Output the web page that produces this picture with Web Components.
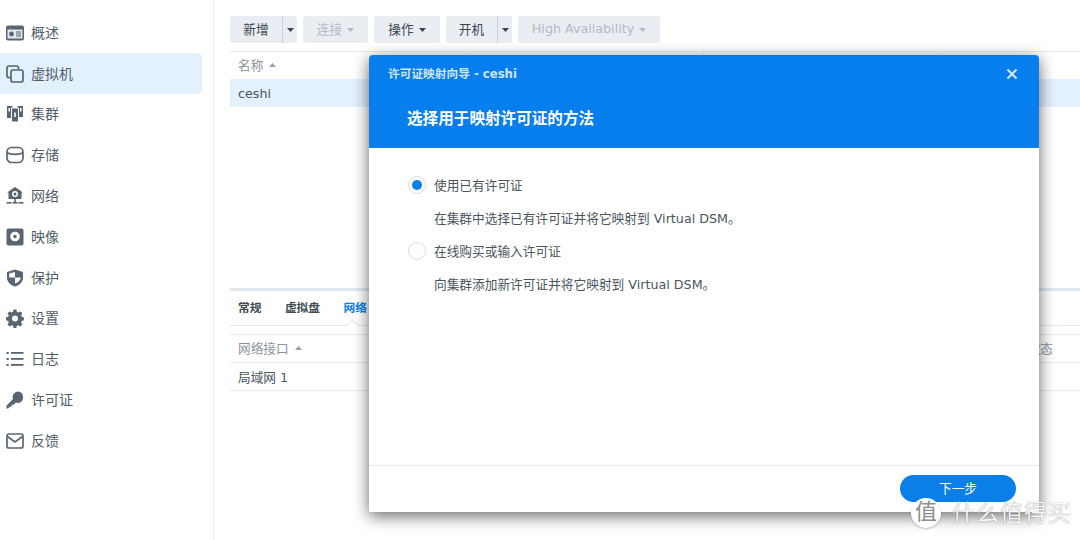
<!DOCTYPE html>
<html lang="zh">
<head>
<meta charset="utf-8">
<title>虚拟机</title>
<style>
html, body {
	margin: 0;
	height: 540px;
	overflow: hidden;
	background: #fff;
	font-family: "DejaVu Sans", "Noto Sans CJK SC", sans-serif;
	color: #4a5560;
}
</style>
</head>
<body>
<vm-app>
	<side-nav slot="nav">
		<nav-item icon="card">概述</nav-item>
		<nav-item icon="copy" active>虚拟机</nav-item>
		<nav-item icon="cluster">集群</nav-item>
		<nav-item icon="db">存储</nav-item>
		<nav-item icon="net">网络</nav-item>
		<nav-item icon="disc">映像</nav-item>
		<nav-item icon="shield">保护</nav-item>
		<nav-item icon="gear">设置</nav-item>
		<nav-item icon="list">日志</nav-item>
		<nav-item icon="key">许可证</nav-item>
		<nav-item icon="mail">反馈</nav-item>
	</side-nav>
	<tool-bar>
		<tool-btn split w="67">新增</tool-btn>
		<tool-btn caret disabled w="65">连接</tool-btn>
		<tool-btn caret w="66">操作</tool-btn>
		<tool-btn split w="66">开机</tool-btn>
		<tool-btn caret disabled w="142">High Availability</tool-btn>
	</tool-bar>
	<vm-table></vm-table>
	<detail-pane></detail-pane>
	<wizard-dialog>
		<wizard-option checked title-text="使用已有许可证">在集群中选择已有许可证并将它映射到 Virtual DSM。</wizard-option>
		<wizard-option title-text="在线购买或输入许可证">向集群添加新许可证并将它映射到 Virtual DSM。</wizard-option>
	</wizard-dialog>
	<water-mark></water-mark>
</vm-app>

<script>
// icons for the side menu, all on a 18x18 box
const ICONS = {
	card: `<rect x="0" y="1.500" width="18" height="15" rx="2" fill="#5a6572"/><rect x="1.500" y="5.500" width="15" height="9" fill="#e4e7ea"/><circle cx="5.500" cy="10" r="2.400" fill="#5a6572"/><path d="M10 8h5M10 10h5M10 12h5" stroke="#5a6572" stroke-width="1.200"/>`,
	copy: `<g fill="none" stroke="#5a6572" stroke-width="1.700"><path d="M4.500 12.500H3a2 2 0 0 1-2-2V3a2 2 0 0 1 2-2h7.500a2 2 0 0 1 2 2v1.500"/><rect x="5" y="5" width="12" height="12" rx="2"/></g>`,
	cluster: `<path d="M1 1h5.500v12H1zM11.500 1H17v11h-5.500z" fill="#5a6572"/><path d="M5 2.500h8V17H5z" fill="#fff"/><path d="M6 3.500h6V16.500H6z" fill="#5a6572"/><path d="M8.200 7.500h1.600V12H8.200zM2.500 3h1.500v3.500H2.500zM14 3h1.500v3.500H14z" fill="#fff"/>`,
	db: `<g fill="none" stroke="#5a6572" stroke-width="1.700"><rect x="1" y="1.500" width="16" height="15" rx="4.500"/><path d="M1 6.500c3 2.400 13 2.400 16 0"/></g>`,
	net: `<g fill="#5a6572"><path d="M9 0 17 5.500h-1.500V12h-13V5.500H1z"/><circle cx="9" cy="7" r="3" fill="#fff"/><circle cx="9" cy="7" r="1.500"/><rect x="8.200" y="12" width="1.600" height="3"/><rect x="0.500" y="15" width="5" height="1.600"/><rect x="6.500" y="15" width="5" height="1.600"/><rect x="12.500" y="15" width="5" height="1.600"/></g>`,
	disc: `<rect x="0.500" y="0.500" width="17" height="17" rx="2" fill="#5a6572"/><circle cx="9" cy="8.500" r="4.800" fill="#fff"/><circle cx="9" cy="8.500" r="1.700" fill="#5a6572"/>`,
	shield: `<path d="M9 0.500 17 3v5.500c0 4.500-3.400 7.700-8 9-4.600-1.300-8-4.500-8-9V3z" fill="#5a6572"/><path d="M9 3v5.500H3.200V4.600zM9 8.500h5.800c-.3 2.900-2.600 5-5.800 6.100z" fill="#fff"/>`,
	gear: `<path d="M7.500 0h3l.5 2.500 1.500.7L14.700 2l2.100 2.100-1.200 2.200.6 1.500 2.300.7v3l-2.300.7-.6 1.500 1.200 2.200-2.100 2.100-2.200-1.200-1.500.6-.5 2.300h-3L7 17.400l-1.500-.6L3.300 18l-2.100-2.100 1.200-2.200-.6-1.500L-.5 11.500v-3l2.300-.7.600-1.500L1.200 4.100 3.300 2l2.200 1.200L7 2.500z" transform="translate(.5 .5) scale(.94)" fill="#5a6572"/><circle cx="9" cy="9.500" r="3" fill="#fff"/>`,
	list: `<g fill="#5a6572"><rect x="0.500" y="2" width="2.200" height="2"/><rect x="0.500" y="8" width="2.200" height="2"/><rect x="0.500" y="14" width="2.200" height="2"/><rect x="5" y="2" width="12.500" height="1.800"/><rect x="5" y="8" width="12.500" height="1.800"/><rect x="5" y="14" width="12.500" height="1.800"/></g>`,
	key: `<path d="M12 0.500a5.800 5.800 0 0 1 0 11.500c-.8 0-1.500-.1-2.200-.4L7.600 13.800H5.600v2H3.600L2.300 17.500H.5v-2.700l6.300-6.600A5.800 5.800 0 0 1 12 .5z" fill="#5a6572"/>`,
	mail: `<g fill="none" stroke="#5a6572" stroke-width="1.700"><rect x="1" y="2" width="16" height="14" rx="2"/><path d="M1.500 4.500 9 10l7.500-5.500"/></g>`
};

const CARET = `<svg width="7" height="4" viewBox="0 0 7 4"><path d="M0 0h7L3.500 4z" fill="currentColor"/></svg>`;

class Base extends HTMLElement {
	constructor(html) {
		super();
		this.attachShadow({mode: "open"}).innerHTML = html;
	}
}

class VmApp extends Base {
	constructor() {
		super(`<style>
		:host { display: flex; position: relative; width: 1080px; height: 540px; overflow: hidden; }
		main { flex: 1; min-width: 0; display: flex; flex-direction: column; padding: 16px 0 0 16px; }
		</style>
		<slot name="nav"></slot>
		<main><slot></slot></main>`);
	}
}

class SideNav extends Base {
	constructor() {
		super(`<style>
		:host { display: flex; flex-direction: column; width: 202px; height: 540px; padding: 12.400px 11px 0 0; border-right: 1px solid #e8ecf0; flex: none; }
		</style><slot></slot>`);
	}
}

class NavItem extends Base {
	constructor() {
		super(`<style>
		:host { display: flex; align-items: center; height: 40.800px; flex: none; gap: 7px; padding-left: 6px; font-size: 14px; color: #525d69; border-radius: 0 5px 5px 0; }
		:host([active]) { background: #e3f0fd; }
		svg { width: 18px; height: 18px; overflow: visible; flex: none; }
		span { position: relative; top: -1px; }
		</style><svg viewBox="0 0 18 18"></svg><span><slot></slot></span>`);
	}
	connectedCallback() {
		this.shadowRoot.querySelector("svg").innerHTML = ICONS[this.getAttribute("icon")];
	}
}

class ToolBar extends Base {
	constructor() {
		super(`<style>
		:host { display: flex; gap: 6px; height: 27px; flex: none; }
		</style><slot></slot>`);
	}
}

class ToolBtn extends Base {
	constructor() {
		super(`<style>
		:host { display: flex; align-items: center; box-sizing: border-box; height: 27px; background: #e9eef3; border-radius: 3px; font-size: 12.700px; color: #3d4650; }
		:host([disabled]) { color: #b3bbc3; }
		.label { flex: 1; display: flex; justify-content: center; align-items: center; gap: 5px; padding-bottom: 2px; }
		.in { display: flex; padding-top: 2px; }
		.arrow { width: 15px; height: 100%; display: flex; align-items: center; justify-content: center; border-left: 1px solid #c9d0d8; box-sizing: border-box; flex: none; }
		</style><span class="label"><slot></slot><span class="in"></span></span><span class="arrow"></span>`);
	}
	connectedCallback() {
		this.style.width = this.getAttribute("w") + "px";
		this.shadowRoot.querySelector(".in").innerHTML = this.hasAttribute("caret") ? CARET : "";
		if(!this.hasAttribute("caret"))
			this.shadowRoot.querySelector(".in").remove();
		if(this.hasAttribute("split"))
			this.shadowRoot.querySelector(".arrow").innerHTML = CARET;
		else
			this.shadowRoot.querySelector(".arrow").remove();
	}
}

class VmTable extends Base {
	constructor() {
		super(`<style>
		:host { display: block; flex: none; margin-top: 8px; font-size: 12.700px; height: 237px; }
		.head { display: grid; grid-template-columns: 236px 237px 235px 1fr; height: 27px; border-top: 1px solid #e6eaee; color: #8b949d; }
		.head div { display: flex; align-items: center; gap: 6px; padding: 0 0 2px 8px; border-left: 1px solid #e6eaee; box-sizing: border-box; }
		.head div:first-child { border-left: 0; }
		.row { height: 28px; background: #e3f0fd; display: flex; align-items: center; padding-left: 8px; color: #4a5560; }
		svg { color: #9aa2aa; transform: rotate(180deg); }
		</style>
		<div class="head"><div>名称 ${CARET}</div><div></div><div></div><div></div></div>
		<div class="row">ceshi</div>`);
	}
}

class DetailPane extends Base {
	constructor() {
		super(`<style>
		:host { display: block; flex: none; border-top: 3px solid #dfe7ef; font-size: 11.700px; }
		.tabs { display: flex; gap: 23.500px; height: 34px; align-items: center; padding-left: 8px; border-bottom: 1px solid #e2e7ec; font-weight: 700; color: #414a54; position: relative; }
		.tabs span { position: relative; top: -2px; }
		.tabs .on { color: #0a7fe8; }
		.notch { position: absolute; left: 118px; bottom: -1px; width: 8px; height: 8px; background: #fff; border: 1px solid #e2e7ec; border-width: 1px 0 0 1px; transform: translateY(4px) rotate(45deg); }
		.head { display: flex; justify-content: space-between; align-items: center; height: 29px; margin-top: 8px; padding: 0 27px 2px 8px; border-top: 1px solid #e6eaee; border-bottom: 1px solid #e6eaee; color: #8b949d; font-size: 12.700px; box-sizing: border-box; }
		.head span { display: flex; align-items: center; gap: 6px; }
		.head svg { color: #9aa2aa; transform: rotate(180deg); }
		.row { height: 28px; display: flex; align-items: center; padding-left: 8px; border-bottom: 1px solid #e6eaee; box-sizing: border-box; font-size: 12.700px; color: #4a5560; }
		</style>
		<div class="tabs"><span>常规</span><span>虚拟盘</span><span class="on">网络</span><i class="notch"></i></div>
		<div class="head"><span>网络接口 ${CARET}</span><span>状态</span></div>
		<div class="row">局域网 1</div>`);
	}
}

class WizardDialog extends Base {
	constructor() {
		super(`<style>
		:host { position: absolute; left: 369px; top: 55px; width: 670px; height: 457px; display: flex; flex-direction: column; background: #fff; border-radius: 4px 4px 0 0; box-shadow: 0 4px 16px rgba(0,0,0,.6); }
		header { height: 93px; flex: none; background: #067eee; border-radius: 4px 4px 0 0; color: #fff; display: flex; flex-direction: column; position: relative; box-sizing: border-box; }
		.title { margin: 11px 0 0 19px; font-size: 11.700px; font-weight: 700; color: #cfe5fb; line-height: 17px; }
		h1 { margin: 25px 0 0 38px; font-size: 15.600px; font-weight: 700; line-height: 22px; }
		.close { position: absolute; right: 21px; top: 13px; width: 12px; height: 12px; }
		.body { flex: 1; display: flex; flex-direction: column; padding: 20px 39px 0; }
		footer { height: 47px; box-sizing: border-box; flex: none; border-top: 1px solid #e6eaee; display: flex; justify-content: flex-end; align-items: flex-start; padding: 9px 23px 0 0; }
		button { width: 116px; height: 27px; border: 0; border-radius: 14px; background: #0a7fe8; color: #fff; font: 12.700px "DejaVu Sans", "Noto Sans CJK SC", sans-serif; padding: 0 0 2px; }
		</style>
		<header>
			<div class="title">许可证映射向导 - ceshi</div>
			<h1>选择用于映射许可证的方法</h1>
			<svg class="close" viewBox="0 0 12 12"><path d="M1.500 1.500l9 9m0-9l-9 9" stroke="#cfe5fb" stroke-width="2.200" fill="none"/></svg>
		</header>
		<div class="body"><slot></slot></div>
		<footer><button>下一步</button></footer>`);
	}
}

class WizardOption extends Base {
	constructor() {
		super(`<style>
		:host { display: block; height: 66px; flex: none; font-size: 12.700px; color: #4a5560; }
		.top { display: flex; align-items: center; gap: 8px; height: 32px; }
		.radio { width: 18px; height: 18px; margin-top: 1px; box-sizing: border-box; border-radius: 50%; border: 1px solid #d9dfe5; background: #fff; display: flex; align-items: center; justify-content: center; flex: none; }
		.radio i { width: 10px; height: 10px; border-radius: 50%; background: #0a7fe8; display: none; }
		:host([checked]) .radio i { display: block; }
		.sub { padding: 2px 0 0 26px; line-height: 34px; height: 32px; }
		</style>
		<div class="top"><span class="radio"><i></i></span><span class="t"></span></div>
		<div class="sub"><slot></slot></div>`);
	}
	connectedCallback() {
		this.shadowRoot.querySelector(".t").textContent = this.getAttribute("title-text");
	}
}

class WaterMark extends Base {
	constructor() {
		super(`<style>
		:host { position: absolute; left: 911px; top: 498px; display: flex; align-items: center; gap: 11px; height: 30px; }
		.seal { width: 30px; height: 30px; border-radius: 50%; background: #fff; color: #8d8d8d; font-size: 22px; line-height: 28px; text-align: center; box-shadow: 0 1px 2px rgba(0,0,0,.25); }
		.name { font-size: 23px; letter-spacing: 1px; color: rgba(255,255,255,.95); text-shadow: 0 0 1px rgba(90,90,90,.9); line-height: 30px; }
		</style>
		<span class="seal">值</span><span class="name">什么值得买</span>`);
	}
}

customElements.define("vm-app", VmApp);
customElements.define("side-nav", SideNav);
customElements.define("nav-item", NavItem);
customElements.define("tool-bar", ToolBar);
customElements.define("tool-btn", ToolBtn);
customElements.define("vm-table", VmTable);
customElements.define("detail-pane", DetailPane);
customElements.define("wizard-dialog", WizardDialog);
customElements.define("wizard-option", WizardOption);
customElements.define("water-mark", WaterMark);
</script>
</body>
</html>
